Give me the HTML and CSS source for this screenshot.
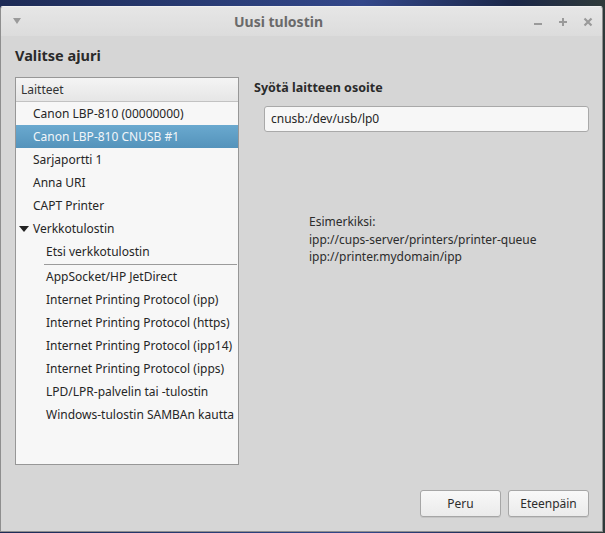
FILE: index.html
```html
<!DOCTYPE html>
<html>
<head>
<meta charset="utf-8">
<link rel="stylesheet" href="styles.css">
</head>
<body>
<div class="desktop">
  <div class="window">
    <div class="titlebar">
      <span class="menu-arrow"></span>
      <span class="title">Uusi tulostin</span>
      <div class="controls">
        <svg width="10" height="10" viewBox="0 0 10 10"><rect x="1" y="6" width="8" height="2" fill="#9a9a9a"/></svg>
        <svg width="10" height="10" viewBox="0 0 10 10"><path d="M4 1h2v3h3v2H6v3H4V6H1V4h3z" fill="#9a9a9a"/></svg>
        <svg width="10" height="10" viewBox="0 0 10 10"><path d="M1.5 1.5L8.5 8.5M8.5 1.5L1.5 8.5" stroke="#9a9a9a" stroke-width="2.2"/></svg>
      </div>
    </div>
    <div class="content">
      <h1 class="heading">Valitse ajuri</h1>
      <div class="main">
        <div class="tree">
          <div class="tree-header">Laitteet</div>
          <div class="row l1">Canon LBP-810 (00000000)</div>
          <div class="row l1 selected">Canon LBP-810 CNUSB #1</div>
          <div class="row l1">Sarjaportti 1</div>
          <div class="row l1">Anna URI</div>
          <div class="row l1">CAPT Printer</div>
          <div class="row l0"><span class="expander"></span>Verkkotulostin</div>
          <div class="row l2">Etsi verkkotulostin</div>
          <div class="sep"></div>
          <div class="row l2">AppSocket/HP JetDirect</div>
          <div class="row l2">Internet Printing Protocol (ipp)</div>
          <div class="row l2">Internet Printing Protocol (https)</div>
          <div class="row l2">Internet Printing Protocol (ipp14)</div>
          <div class="row l2">Internet Printing Protocol (ipps)</div>
          <div class="row l2">LPD/LPR-palvelin tai -tulostin</div>
          <div class="row l2">Windows-tulostin SAMBAn kautta</div>
        </div>
        <div class="panel">
          <div class="panel-title">Syötä laitteen osoite</div>
          <div class="entry">cnusb:/dev/usb/lp0</div>
          <div class="examples">Esimerkiksi:<br>ipp://cups-server/printers/printer-queue<br>ipp://printer.mydomain/ipp</div>
        </div>
      </div>
      <div class="buttons">
        <div class="btn">Peru</div>
        <div class="btn">Eteenpäin</div>
      </div>
    </div>
  </div>
</div>
</body>
</html>
```
FILE: styles.css
```css
html, body {
  margin: 0;
  padding: 0;
}
body {
  width: 605px;
  height: 533px;
  overflow: hidden;
  font-family: "Noto Sans", "Open Sans", sans-serif;
  font-size: 12px;
  color: #2c2c2c;
}
.desktop {
  width: 605px;
  height: 533px;
  background: linear-gradient(90deg, #1d2a55 0%, #2b3f7a 40%, #33478a 60%, #1b2748 85%, #2f3a3a 100%);
  padding-top: 6px;
  box-sizing: border-box;
}
.window {
  width: 603px;
  height: 526px;
  box-sizing: border-box;
  border: 1px solid #8e8e8e;
  border-top-color: #f0f0f0;
  border-radius: 3px 3px 0 0;
  background: #d6d6d6;
  display: flex;
  flex-direction: column;
}
.titlebar {
  height: 29px;
  flex: none;
  background: linear-gradient(#e6e6e6, #dcdcdc);
  display: flex;
  align-items: center;
  position: relative;
  border-radius: 3px 3px 0 0;
}
.menu-arrow {
  width: 0;
  height: 0;
  border-left: 4.5px solid transparent;
  border-right: 4.5px solid transparent;
  border-top: 6px solid #9a9a9a;
  margin-left: 12px;
  margin-top: -2px;
}
.title {
  position: absolute;
  left: 0;
  right: 0;
  text-align: center;
  font-weight: bold;
  font-size: 14px;
  color: #6a6a6a;
  margin-left: -46px;
  pointer-events: none;
}
.controls {
  margin-left: auto;
  margin-right: 9px;
  display: flex;
  gap: 15px;
}
.content {
  flex: 1;
  display: flex;
  flex-direction: column;
  padding: 0 13px 0 14px;
}
.heading {
  margin: 9px 0 0 0;
  font-size: 14.5px;
  font-weight: bold;
  color: #2a2a2a;
  line-height: 20px;
}
.main {
  display: flex;
  margin-top: 12px;
}
.tree {
  width: 224px;
  height: 388px;
  box-sizing: border-box;
  border: 1px solid #979797;
  background: #f7f7f7;
}
.tree-header {
  height: 24px;
  line-height: 23px;
  box-sizing: border-box;
  padding-left: 5px;
  background: linear-gradient(#f4f4f4, #e6e6e6);
  border-bottom: 1px solid #c2c2c2;
  color: #333;
}
.row {
  height: 23px;
  line-height: 23px;
  white-space: nowrap;
  color: #262626;
  display: flex;
  align-items: center;
}
.l0 { padding-left: 3px; }
.l1 { padding-left: 17px; }
.l2 { padding-left: 30px; }
.selected {
  background: linear-gradient(#6aa9cf, #5493bb);
  color: #f2f6f9;
}
.expander {
  width: 0;
  height: 0;
  border-left: 5px solid transparent;
  border-right: 5px solid transparent;
  border-top: 6px solid #222;
  margin-right: 4px;
}
.sep {
  height: 1px;
  background: #9b9b9b;
  margin: 1px 1px 0 28px;
}
.panel {
  flex: 1;
  padding-left: 15px;
}
.panel-title {
  font-weight: bold;
  font-size: 12.5px;
  margin-top: 1px;
  line-height: 20px;
  color: #2a2a2a;
}
.entry {
  margin: 8px 0 0 10px;
  height: 26px;
  box-sizing: border-box;
  border: 1px solid #a9a9a9;
  border-radius: 3px;
  background: #f7f7f7;
  line-height: 24px;
  padding-left: 6px;
  color: #262626;
}
.examples {
  margin: 81px 0 0 55px;
  line-height: 17.5px;
  color: #2c2c2c;
}
.buttons {
  display: flex;
  justify-content: flex-end;
  gap: 7px;
  margin-top: 25px;
}
.btn {
  width: 81px;
  height: 27px;
  box-sizing: border-box;
  border: 1px solid #a6a6a6;
  border-radius: 3px;
  background: linear-gradient(#f8f8f8, #ebebeb);
  text-align: center;
  line-height: 25px;
  color: #2c2c2c;
  box-shadow: 0 1px 0 rgba(0,0,0,0.08);
}
```
